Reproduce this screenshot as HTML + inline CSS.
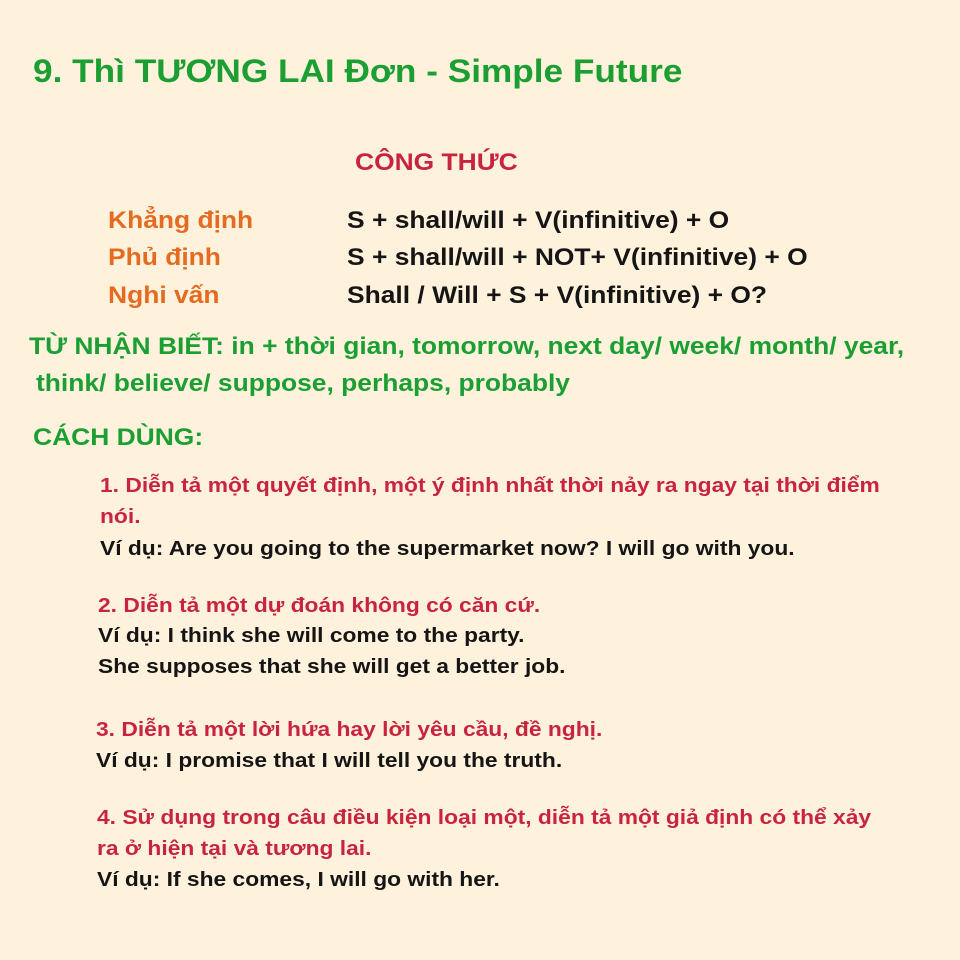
<!DOCTYPE html>
<html><head><meta charset="utf-8"><style>
html,body{margin:0;padding:0}
body{width:960px;height:960px;background:#fef2dd;position:relative;overflow:hidden;font-family:"Liberation Sans","DejaVu Sans",sans-serif;font-weight:bold}
.l{position:absolute;white-space:nowrap;line-height:30px;height:30px;transform-origin:0 50%}
.m{transform:scaleX(1.10)}
.s{transform:scaleX(1.14)}
.g{color:#1b9e32}.r{color:#c9243f}.o{color:#e56b20}.k{color:#151515}
</style></head><body>
<div class="l g m" style="left:33px;top:56px;font-size:32px">9. Thì TƯƠNG LAI Đơn - Simple Future</div>
<div class="l r m" style="left:355px;top:148px;font-size:24px">CÔNG THỨC</div>
<div class="l o m" style="left:108px;top:206px;font-size:24px">Khẳng định</div>
<div class="l k m" style="left:347px;top:206px;font-size:24px">S + shall/will + V(infinitive) + O</div>
<div class="l o m" style="left:108px;top:243px;font-size:24px">Phủ định</div>
<div class="l k m" style="left:347px;top:243px;font-size:24px">S + shall/will + NOT+ V(infinitive) + O</div>
<div class="l o m" style="left:108px;top:281px;font-size:24px">Nghi vấn</div>
<div class="l k m" style="left:347px;top:281px;font-size:24px">Shall / Will + S + V(infinitive) + O?</div>
<div class="l g m" style="left:29px;top:332px;font-size:24px">TỪ NHẬN BIẾT: in + thời gian, tomorrow, next day/ week/ month/ year,</div>
<div class="l g m" style="left:36px;top:369px;font-size:24px">think/ believe/ suppose, perhaps, probably</div>
<div class="l g m" style="left:33px;top:423px;font-size:24px">CÁCH DÙNG:</div>
<div class="l r s" style="left:100px;top:471px;font-size:20px">1. Diễn tả một quyết định, một ý định nhất thời nảy ra ngay tại thời điểm</div>
<div class="l r s" style="left:100px;top:502px;font-size:20px">nói.</div>
<div class="l k s" style="left:100px;top:534px;font-size:20px">Ví dụ: Are you going to the supermarket now? I will go with you.</div>
<div class="l r s" style="left:98px;top:591px;font-size:20px">2. Diễn tả một dự đoán không có căn cứ.</div>
<div class="l k s" style="left:98px;top:621px;font-size:20px">Ví dụ: I think she will come to the party.</div>
<div class="l k s" style="left:98px;top:652px;font-size:20px">She supposes that she will get a better job.</div>
<div class="l r s" style="left:96px;top:715px;font-size:20px">3. Diễn tả một lời hứa hay lời yêu cầu, đề nghị.</div>
<div class="l k s" style="left:96px;top:746px;font-size:20px">Ví dụ: I promise that I will tell you the truth.</div>
<div class="l r s" style="left:97px;top:803px;font-size:20px">4. Sử dụng trong câu điều kiện loại một, diễn tả một giả định có thể xảy</div>
<div class="l r s" style="left:97px;top:834px;font-size:20px">ra ở hiện tại và tương lai.</div>
<div class="l k s" style="left:97px;top:865px;font-size:20px">Ví dụ: If she comes, I will go with her.</div>
</body></html>
